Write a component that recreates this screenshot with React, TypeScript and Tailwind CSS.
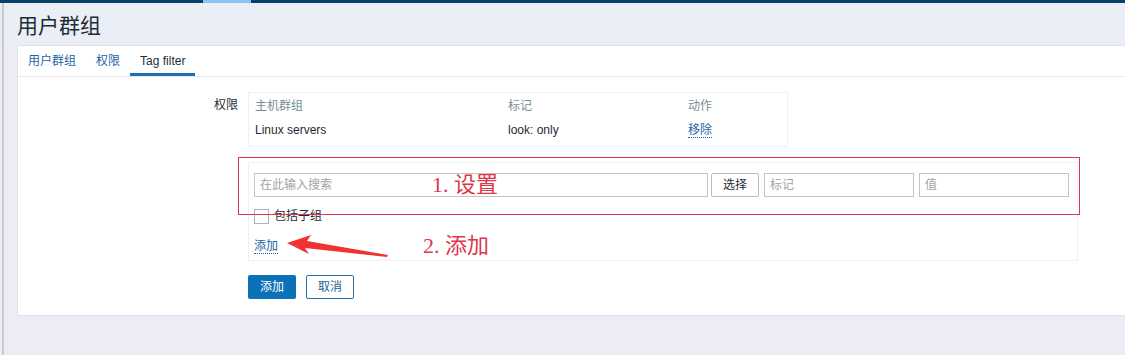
import React from "react";

const cjk = { fontFamily: '"Liberation Sans", "Noto Sans CJK SC", sans-serif' };
const serif = { fontFamily: '"Liberation Serif", "Noto Sans CJK SC", serif' };

const Tabs: React.FC = () => {
  const tabs = ["用户群组", "权限", "Tag filter"];
  return (
    <div className="flex h-[31px] border-b border-[#e6e9ee]">
      {tabs.map((t, i) => (
        <div
          key={t}
          className={
            i === 2
              ? "px-[10px] flex items-center text-[12px] text-[#1f2c33] border-b-[3px] border-[#1b6fb3] pt-[3px]"
              : "px-[10px] flex items-center text-[12px] text-[#1d65a5]"
          }
        >
          {t}
        </div>
      ))}
    </div>
  );
};

const PermTable: React.FC = () => (
  <div className="w-[540px] h-[55px] border border-[#eef0f3] text-[12px] pl-[6px] pt-[1px]">
    <div className="flex h-[24px] items-center text-[#768d99]">
      <div className="w-[253px]">主机群组</div>
      <div className="w-[180px]">标记</div>
      <div>动作</div>
    </div>
    <div className="flex h-[24px] items-center text-[#1f2c33]">
      <div className="w-[253px]">Linux servers</div>
      <div className="w-[180px]">look: only</div>
      <div className="text-[#1d65a5] border-b border-dotted border-[#1d65a5] leading-[14px]">移除</div>
    </div>
  </div>
);

const Input: React.FC<{ placeholder: string; w: string }> = ({ placeholder, w }) => (
  <div
    className={`${w} h-[24px] border border-[#c4c4c4] flex items-center px-[5px] text-[12px] text-[#a0a4a8] bg-white`}
  >
    {placeholder}
  </div>
);

const TagBox: React.FC = () => (
  <div className="w-[830px] h-[99px] border border-[#eef0f3] pl-[5px] pt-[10px] text-[12px]">
    <div className="flex items-center">
      <Input placeholder="在此输入搜索" w="w-[454px]" />
      <div className="ml-[3px] w-[48px] h-[24px] border border-[#b8bcc0] rounded-[2px] flex items-center justify-center text-[#1f2c33]">
        选择
      </div>
      <div className="ml-[5px]">
        <Input placeholder="标记" w="w-[150px]" />
      </div>
      <div className="ml-[5px]">
        <Input placeholder="值" w="w-[150px]" />
      </div>
    </div>
    <div className="flex items-center mt-[10px]">
      <div className="w-[15px] h-[15px] border border-[#aeb3b8] bg-white" />
      <span className="ml-[5px] text-[#1f2c33]">包括子组</span>
    </div>
    <div className="mt-[14px] flex">
      <span className="text-[#1d65a5] border-b border-dotted border-[#1d65a5] leading-[14px]">添加</span>
    </div>
  </div>
);

export default function App() {
  return (
    <div className="w-[1125px] h-[355px] bg-[#ebecf4] overflow-hidden relative" style={cjk}>
      <div className="h-[3px] bg-[#0b3f66] flex">
        <div className="ml-[203px] w-[48px] bg-[#8cc4ee]" />
      </div>
      <div className="ml-[2px] border-l-2 border-[#c9cad0] h-full">
        <div className="pl-[13px] pt-[9px] h-[42px] text-[21px] leading-[28px] text-[#1f2c33] bg-[#e9eef7]">
          用户群组
        </div>
        <div className="ml-[13px] h-[271px] bg-white border-t border-l border-b border-[#dfe2e8]">
          <Tabs />
          <div className="flex pt-[15px]">
            <div className="w-[220px] text-right text-[12px] text-[#1f2c33] pt-[4px]">权限</div>
            <div className="ml-[10px] flex flex-col">
              <PermTable />
              <div className="mt-[15px]">
                <TagBox />
              </div>
              <div className="flex gap-[10px] mt-[14px] text-[12px]">
                <div className="w-[48px] h-[24px] bg-[#0b72b8] rounded-[2px] text-white flex items-center justify-center">
                  添加
                </div>
                <div className="w-[48px] h-[24px] border border-[#2a6fa8] rounded-[2px] text-[#1d5f96] flex items-center justify-center">
                  取消
                </div>
              </div>
            </div>
          </div>
        </div>
      </div>

      {/* annotations drawn over the screenshot */}
      <div className="absolute left-[238px] top-[157px] w-[842px] h-[58px] border border-[#d93a4f]" />
      <div className="absolute left-[432px] top-[172px] text-[22px] leading-[26px] text-[#e0364a]" style={serif}>
        1. 设置
      </div>
      <div className="absolute left-[423px] top-[233px] text-[22px] leading-[26px] text-[#e0364a]" style={serif}>
        2. 添加
      </div>
      <svg className="absolute left-[284px] top-[234px]" width="110" height="26" viewBox="0 0 110 26">
        <polygon points="3,9 27,1 23,7 104,21 103,23 21,14 25,20" fill="#f03232" />
      </svg>
    </div>
  );
}
